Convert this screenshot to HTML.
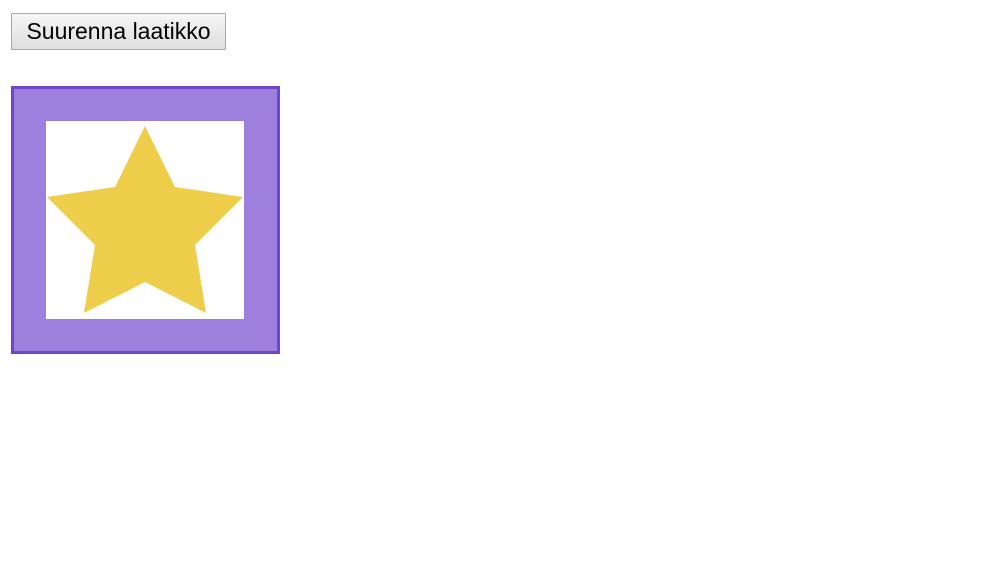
<!DOCTYPE html>
<html><head><style>
body{margin:0;background:#fff;font-family:"Liberation Sans",Arial,sans-serif;}
button{position:absolute;left:11px;top:13px;width:215px;height:37px;box-sizing:border-box;border:1px solid #a9a9a9;border-radius:1px;background:linear-gradient(#f6f6f6,#dedede);font-family:"Liberation Sans",Arial,sans-serif;font-size:23px;color:#000;padding:0;white-space:nowrap;}
.box{position:absolute;left:11px;top:86px;width:269px;height:268px;box-sizing:border-box;border:3px solid #7046cc;background:#9d7fdd;}
.inner{position:absolute;left:32px;top:32px;width:198px;height:198px;background:#fff;}
</style></head><body>
<button>Suurenna laatikko</button>
<div class="box"><div class="inner">
<svg width="198" height="198" viewBox="46 121 198 198" style="display:block">
<polygon fill="#eecd4a" points="145,126 175,187 243,197 195,245 206,313 145,282 84,313 95,245 47,197 115,187"/>
</svg>
</div></div>
</body></html>
